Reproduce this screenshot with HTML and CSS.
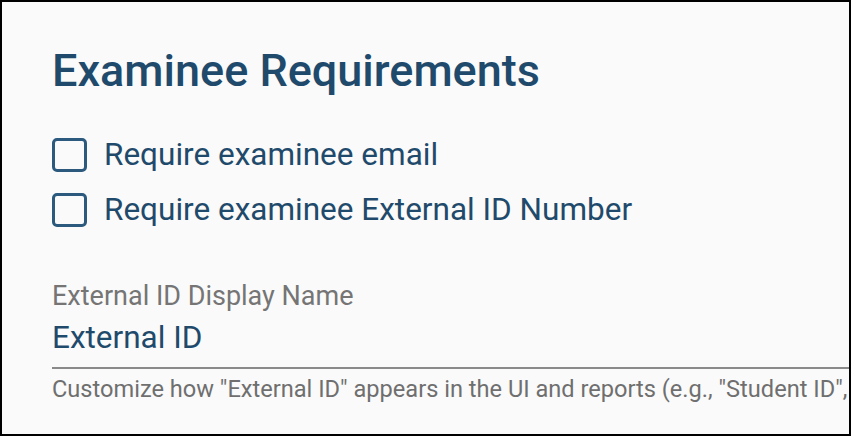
FILE: index.html
```html
<!DOCTYPE html>
<html lang="en">
<head>
  <meta charset="UTF-8" />
  <meta name="viewport" content="width=device-width, initial-scale=1.0"/>
  <title>Examinee Requirements</title>
  <link rel="stylesheet" href="styles.css">
</head>
<body>
  <div class="panel">
    <h2 class="titulo">Examinee Requirements</h2>

    <div class="opciones">
      <label class="opcion">
        <span class="caja"></span>
        <span>Require examinee email</span>
      </label>
      <label class="opcion">
        <span class="caja"></span>
        <span>Require examinee External ID Number</span>
      </label>
    </div>

    <div class="campo">
      <div class="campo-label">External ID Display Name</div>
      <div class="campo-valor">External ID</div>
      <div class="campo-ayuda">Customize how "External ID" appears in the UI and reports (e.g., "Student ID",</div>
    </div>
  </div>
</body>
</html>
```

FILE: styles.css
```css
* {
  margin: 0;
  padding: 0;
  box-sizing: border-box;
}
html, body {
  width: 100%;
  height: 100%;
  overflow: hidden;
  background-color: #000;
  font-family: Roboto, "Liberation Sans", sans-serif;
}
.panel {
  width: 851px;
  height: 436px;
  border: 2px solid #000;
  background-color: #fafafa;
  padding: 41px 0 0 50px;
  overflow: hidden;
}
.titulo {
  font-size: 45px;
  font-weight: 500;
  color: #1f4a6b;
  line-height: 56px;
  margin-bottom: 36px;
}
.opciones {
  display: flex;
  flex-direction: column;
  gap: 15px;
}
.opcion {
  display: flex;
  align-items: center;
  gap: 17px;
  font-size: 31.5px;
  color: #1f4a6b;
  line-height: 40px;
  white-space: nowrap;
}
.caja {
  width: 35px;
  height: 34px;
  border: 3px solid #2b5a7e;
  border-radius: 5px;
  flex-shrink: 0;
}
.campo {
  margin-top: 50px;
}
.campo-label {
  font-size: 27px;
  color: #757575;
  line-height: 32px;
  white-space: nowrap;
}
.campo-valor {
  margin-top: 6px;
  font-size: 31.5px;
  color: #1f4a6b;
  line-height: 40px;
  padding-bottom: 9px;
  border-bottom: 2px solid #8a8a8a;
}
/* texto de ayuda en una sola línea */
.campo-ayuda {
  font-size: 23.6px;
  color: #6f6f6f;
  line-height: 28px;
  white-space: nowrap;
  margin-top: 6px;
}
```
